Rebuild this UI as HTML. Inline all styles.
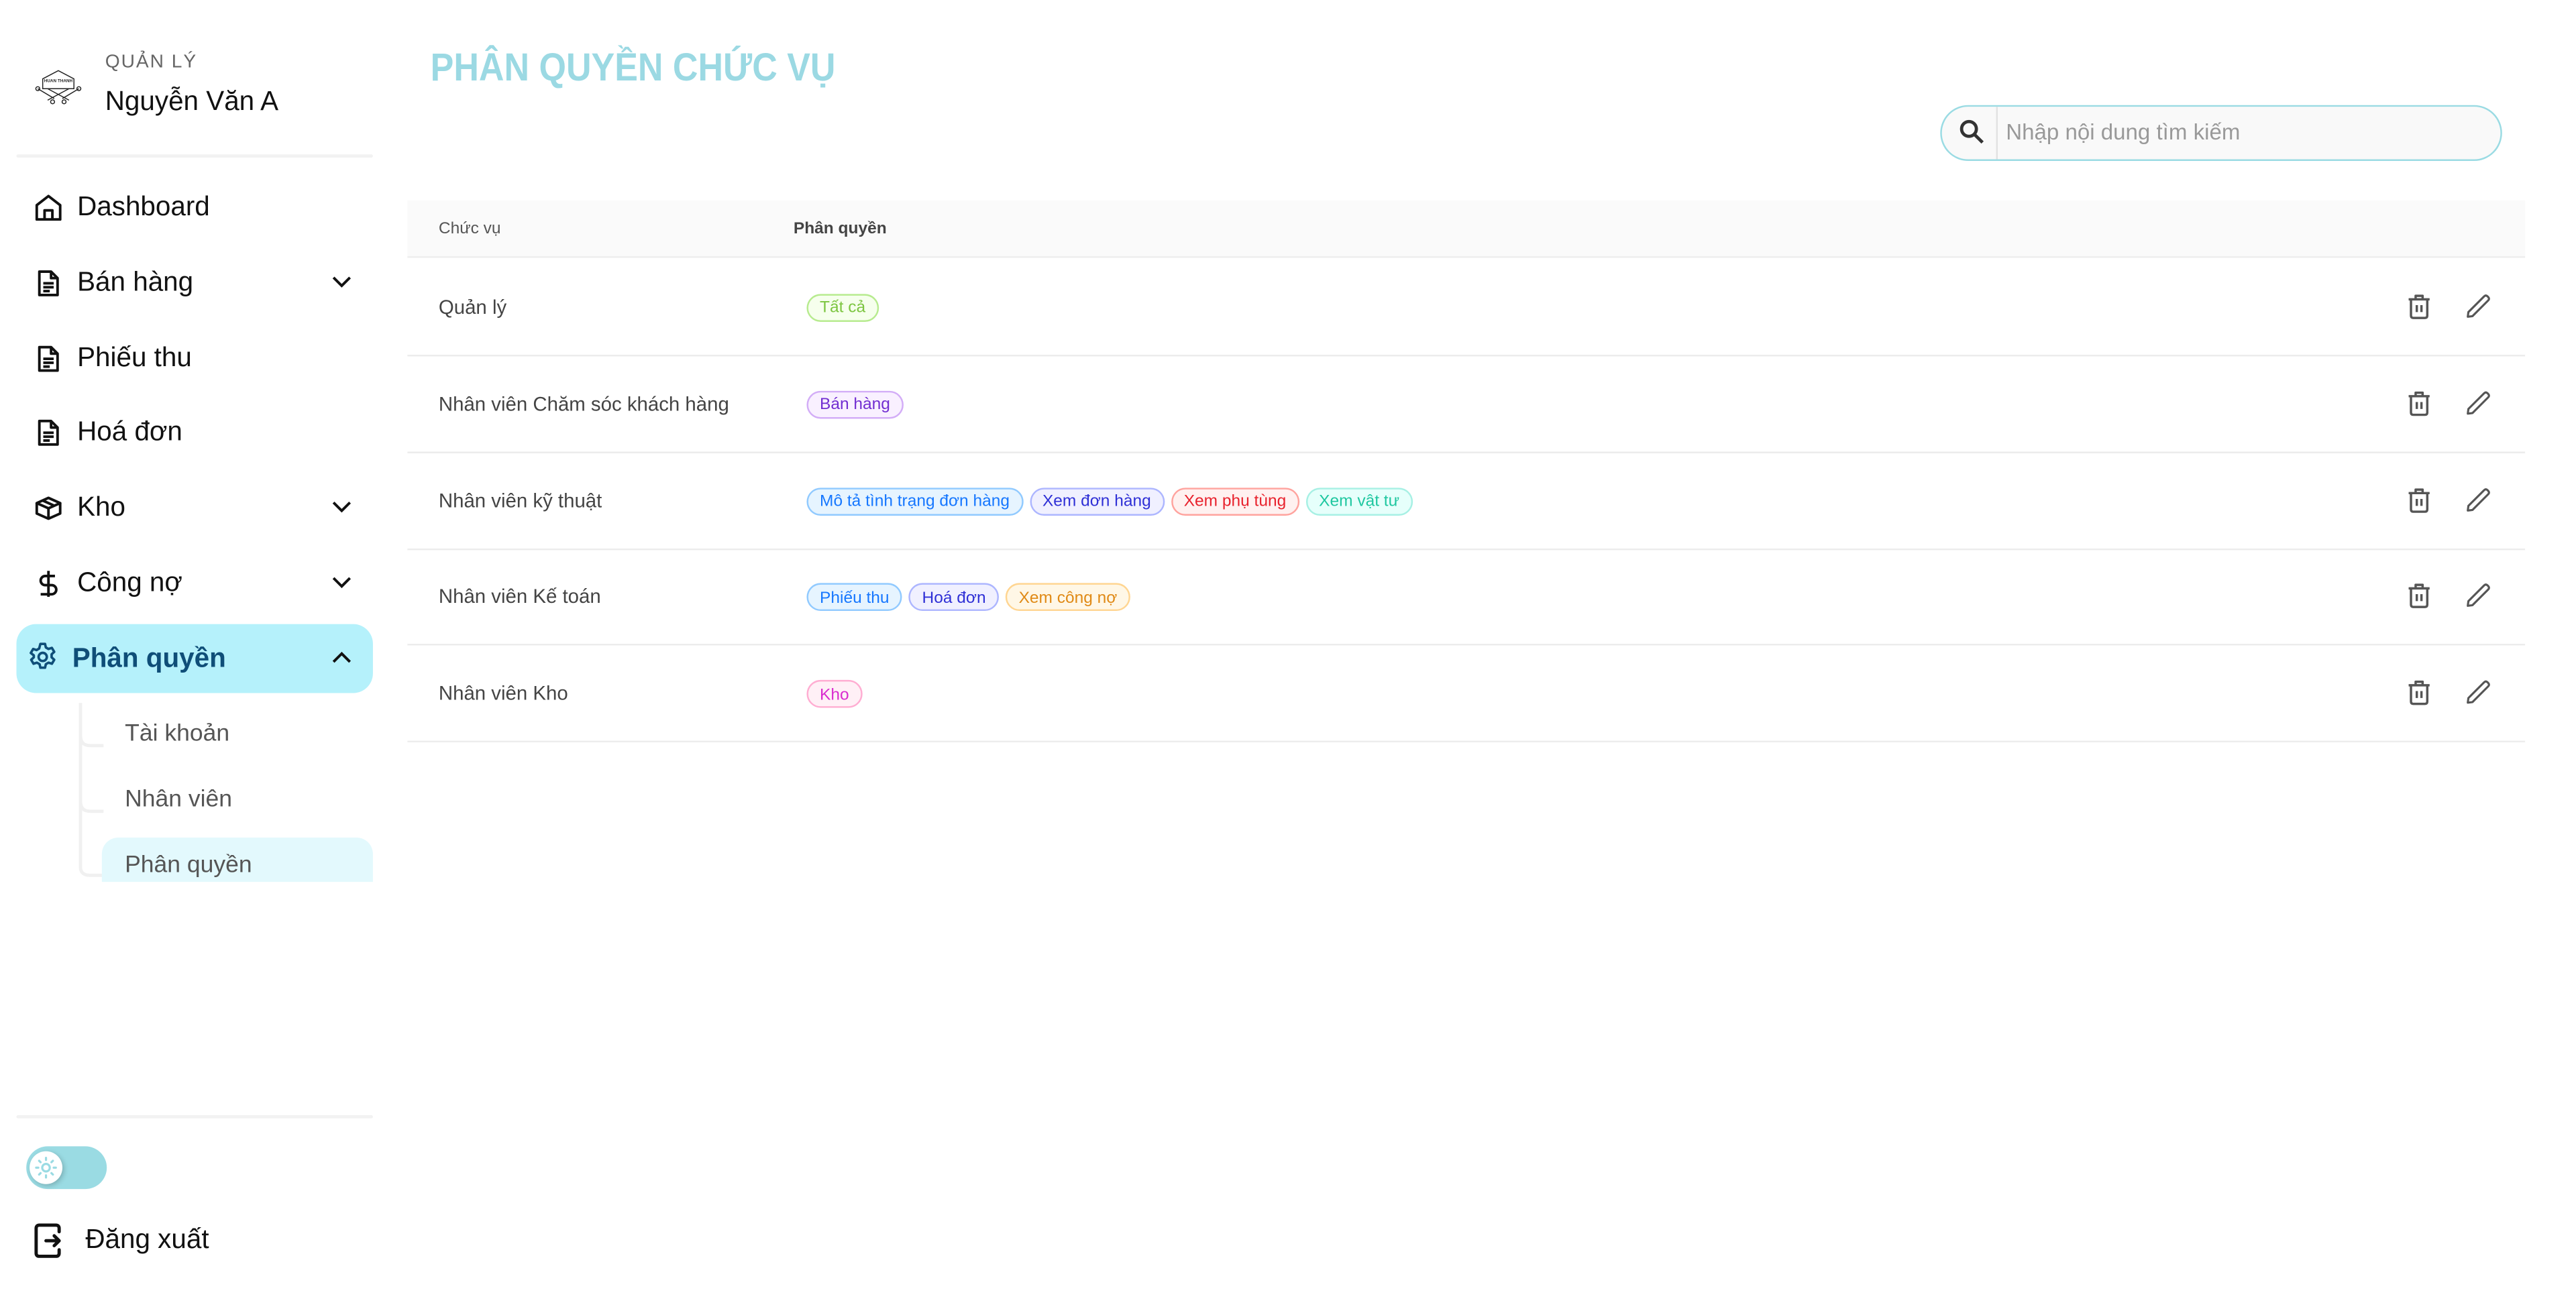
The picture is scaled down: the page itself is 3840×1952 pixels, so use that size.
<!DOCTYPE html>
<html><head><meta charset="utf-8">
<style>
html,body{margin:0;padding:0;background:#fff;width:3840px;height:1950px;overflow:hidden}
#w{position:absolute;left:0;top:0;width:1568px;height:797px;transform:scale(2.449);transform-origin:0 0;font-family:"Liberation Sans","DejaVu Sans",sans-serif}
.a{position:absolute}
.mi{position:absolute;left:20px;height:24px;display:flex;align-items:center;font-size:16.5px;color:#111;margin-top:1px}
.mi svg{width:19px;height:19px;margin-right:8px}
.chev{position:absolute;left:201px;width:14px;height:14px}
.sub{position:absolute;left:76px;font-size:14.5px;color:#555;margin-top:1px}
.row{position:absolute;left:248px;width:1289px;height:58px;border-bottom:1.5px solid #ececec}
.row .t{position:absolute;left:19px;top:22px;font-size:12px;color:#444}
.tags{position:absolute;left:243px;top:21px;display:flex;gap:4px}
.tag{box-sizing:border-box;display:flex;align-items:center;padding:1px 7px 0;border-radius:9px;font-size:10px;border:1px solid;height:17px}
.g{background:#f6ffed;color:#7cc540;border-color:#b7eb8f}
.p{background:#f9f0ff;color:#722ed1;border-color:#d3adf7}
.b{background:#e6f4ff;color:#1677ff;border-color:#91caff}
.gb{background:#f0f0ff;color:#2f30d6;border-color:#adb6ff}
.r{background:#fff1f0;color:#e8222d;border-color:#ffa39e}
.c{background:#e6fffb;color:#1fc7a0;border-color:#a7f0e4}
.o{background:#fff7e6;color:#e08a16;border-color:#ffd591}
.m{background:#fff0f6;color:#d92ccf;border-color:#ffadd2}
.ic{position:absolute;top:20px;width:17px;height:17px}
</style></head><body><div id="w">
<svg class="a" style="left:20px;top:40px" width="31" height="26" viewBox="0 0 31 26" fill="none" stroke="#222" stroke-width="0.6">
<path d="M6 8 L15.5 3 L25 8 L25 14 L6 14 Z"/>
<text x="15.5" y="10" font-size="2.6" text-anchor="middle" fill="#222" stroke="none" font-family="Liberation Sans" font-weight="bold">HUAN THANH</text>
<path d="M3 14 L13 20 M28 14 L18 20 M9 21 L22 14 M22 21 L9 14"/>
<circle cx="3" cy="14" r="1.2"/><circle cx="28" cy="14" r="1.2"/><circle cx="12" cy="22" r="1.2"/><circle cx="19" cy="22" r="1.2"/>
</svg>
<div class="a" style="left:64px;top:32px;font-size:11.5px;color:#666;letter-spacing:0.8px">QUẢN LÝ</div>
<div class="a" style="left:64px;top:53px;font-size:16.5px;color:#111">Nguyễn Văn A</div>
<div class="a" style="left:10px;top:94px;width:217px;height:2px;background:#f2f2f2;border-radius:1px"></div>

<div class="mi" style="top:113px"><svg viewBox="0 0 24 24" fill="none" stroke="#111" stroke-width="2" stroke-linejoin="round"><path d="M3 10 L12 3 L21 10 V21 H3 Z"/><path d="M9 21 V14 H15 V21"/></svg>Dashboard</div>
<div class="mi" style="top:159px"><svg viewBox="0 0 24 24" fill="none" stroke="#111" stroke-width="2" stroke-linejoin="round"><path d="M5 3 H14 L19 8 V21 H5 Z"/><path d="M14 3 V8 H19 M8 12 H16 M8 15 H16 M8 18 H13"/></svg>Bán hàng</div>
<svg class="chev" style="top:164px" viewBox="0 0 14 14" fill="none" stroke="#111" stroke-width="1.6"><path d="M2 5 L7 10 L12 5"/></svg>
<div class="mi" style="top:205px"><svg viewBox="0 0 24 24" fill="none" stroke="#111" stroke-width="2" stroke-linejoin="round"><path d="M5 3 H14 L19 8 V21 H5 Z"/><path d="M14 3 V8 H19 M8 12 H16 M8 15 H16 M8 18 H13"/></svg>Phiếu thu</div>
<div class="mi" style="top:250px"><svg viewBox="0 0 24 24" fill="none" stroke="#111" stroke-width="2" stroke-linejoin="round"><path d="M5 3 H14 L19 8 V21 H5 Z"/><path d="M14 3 V8 H19 M8 12 H16 M8 15 H16 M8 18 H13"/></svg>Hoá đơn</div>
<div class="mi" style="top:296px"><svg viewBox="0 0 24 24" fill="none" stroke="#111" stroke-width="2" stroke-linejoin="round"><path d="M3 8 L12 4 L21 8 L12 12 Z"/><path d="M3 8 V16 L12 20 L21 16 V8 M12 12 V20 M7.5 6 L16.5 10"/></svg>Kho</div>
<svg class="chev" style="top:301px" viewBox="0 0 14 14" fill="none" stroke="#111" stroke-width="1.6"><path d="M2 5 L7 10 L12 5"/></svg>
<div class="mi" style="top:342px"><svg viewBox="0 0 24 24" fill="none" stroke="#111" stroke-width="2"><path d="M12 2 V22 M17 6 H9.5 A3.5 3.5 0 0 0 9.5 13 H14.5 A3.5 3.5 0 0 1 14.5 20 H6"/></svg>Công nợ</div>
<svg class="chev" style="top:347px" viewBox="0 0 14 14" fill="none" stroke="#111" stroke-width="1.6"><path d="M2 5 L7 10 L12 5"/></svg>

<div class="a" style="left:10px;top:380px;width:217px;height:42px;background:#b5f1fb;border-radius:12px"></div>
<svg class="a" style="left:16px;top:390px" width="20" height="20" viewBox="0 0 24 24" fill="none" stroke="#0f4e78" stroke-width="1.8" stroke-linejoin="round"><circle cx="12" cy="12" r="3"/><path d="M10.3 2.5h3.4l.6 2.6 1.9 1.1 2.5-.8 1.7 2.9-1.9 1.8v2.2l1.9 1.8-1.7 2.9-2.5-.8-1.9 1.1-.6 2.6h-3.4l-.6-2.6-1.9-1.1-2.5.8-1.7-2.9 1.9-1.8V10.9L3.3 9.1 5 6.2l2.5.8 1.9-1.1z"/></svg>
<div class="a" style="left:44px;top:392px;font-size:16.5px;font-weight:bold;color:#0f4e78">Phân quyền</div>
<svg class="chev" style="top:394px" viewBox="0 0 14 14" fill="none" stroke="#111" stroke-width="1.6"><path d="M2 9 L7 4 L12 9"/></svg>

<svg class="a" style="left:45px;top:428px" width="20" height="110" fill="none" stroke="#f0f0f0" stroke-width="2"><path d="M4 0 V100 Q4 105 10 105 H18 M4 20 Q4 26 10 26 H18 M4 60 Q4 66 10 66 H18"/></svg>
<div class="a" style="left:62px;top:510px;width:165px;height:27px;background:#e3f9fd;border-radius:10px 10px 0 0"></div>
<div class="sub" style="top:438px">Tài khoản</div>
<div class="sub" style="top:478px">Nhân viên</div>
<div class="sub" style="top:518px;height:18px;overflow:hidden">Phân quyền</div>

<div class="a" style="left:10px;top:679px;width:217px;height:2px;background:#f2f2f2;border-radius:1px"></div>
<div class="a" style="left:16px;top:698px;width:49px;height:26px;border-radius:13px;background:#9adbe3"></div>
<div class="a" style="left:18px;top:701px;width:20px;height:20px;border-radius:50%;background:#fff;box-shadow:1px 1px 3px rgba(0,0,0,.2)"></div>
<svg class="a" style="left:21px;top:704px" width="14" height="14" viewBox="0 0 14 14" fill="none" stroke="#9adbe3" stroke-width="1.3" stroke-linecap="round"><circle cx="7" cy="7" r="2.3"/><path d="M7 1v1.3M7 11.7V13M1 7h1.3M11.7 7H13M2.8 2.8l.9.9M10.3 10.3l.9.9M2.8 11.2l.9-.9M10.3 3.7l.9-.9"/></svg>
<svg class="a" style="left:20px;top:745px" width="19" height="21" viewBox="0 0 19 21" fill="none" stroke="#111" stroke-width="2" stroke-linecap="round" stroke-linejoin="round"><path d="M16 5 V3 Q16 1 14 1 H4 Q2 1 2 3 V18 Q2 20 4 20 H14 Q16 20 16 18 V16"/><path d="M8 10.5 H16 M13 7.5 L16 10.5 L13 13.5"/></svg>
<div class="a" style="left:52px;top:746px;font-size:16.5px;color:#111">Đăng xuất</div>

<div class="a" style="left:262px;top:28px;font-size:24px;font-weight:bold;color:#9bd9e3;transform:scaleX(0.885);transform-origin:0 0;white-space:nowrap">PHÂN QUYỀN CHỨC VỤ</div>
<div class="a" style="left:1181px;top:64px;width:340px;height:32px;border:1px solid #9adbe3;border-radius:17px;background:#f9f9f9"></div>
<div class="a" style="left:1215px;top:65px;width:1px;height:32px;background:#e2e2e2"></div>
<svg class="a" style="left:1191px;top:71px" width="18" height="18" viewBox="0 0 24 24" fill="none" stroke="#333" stroke-width="2.6"><circle cx="10" cy="10" r="6"/><path d="M14.5 14.5 L21 21"/></svg>
<div class="a" style="left:1221px;top:73px;font-size:13.5px;color:#999">Nhập nội dung tìm kiếm</div>

<div class="a" style="left:248px;top:122px;width:1289px;height:34px;background:#fafafa;border-bottom:1.5px solid #eee"></div>
<div class="a" style="left:267px;top:134px;font-size:10px;color:#555">Chức vụ</div>
<div class="a" style="left:483px;top:134px;font-size:10px;color:#444;font-weight:bold">Phân quyền</div>

<div class="row" style="top:157.5px"><div class="t">Quản lý</div><div class="tags"><span class="tag g">Tất cả</span></div></div>
<div class="row" style="top:216.5px"><div class="t">Nhân viên Chăm sóc khách hàng</div><div class="tags"><span class="tag p">Bán hàng</span></div></div>
<div class="row" style="top:275.5px"><div class="t">Nhân viên kỹ thuật</div><div class="tags"><span class="tag b">Mô tả tình trạng đơn hàng</span><span class="tag gb">Xem đơn hàng</span><span class="tag r">Xem phụ tùng</span><span class="tag c">Xem vật tư</span></div></div>
<div class="row" style="top:334px"><div class="t">Nhân viên Kế toán</div><div class="tags"><span class="tag b">Phiếu thu</span><span class="tag gb">Hoá đơn</span><span class="tag o">Xem công nợ</span></div></div>
<div class="row" style="top:393px"><div class="t">Nhân viên Kho</div><div class="tags"><span class="tag m">Kho</span></div></div>

<div id="icons"></div>
<script>
var h='';[157.5,216.5,275.5,334,393].forEach(function(t){
h+='<svg class="ic" style="left:1464px;top:'+(t+20)+'px" viewBox="0 0 24 24" fill="none" stroke="#555" stroke-width="2" stroke-linejoin="round"><path d="M3 6 H21 M9 6 V3 H15 V6 M5 6 V20 Q5 22 7 22 H17 Q19 22 19 20 V6 M10 11 V17 M14 11 V17"/></svg>';
h+='<svg class="ic" style="left:1500px;top:'+(t+20)+'px" viewBox="0 0 24 24" fill="none" stroke="#555" stroke-width="1.8" stroke-linejoin="round"><path d="M3 21 L3.5 17 L17 3.5 Q18.5 2 20 3.5 L20.5 4 Q22 5.5 20.5 7 L7 20.5 Z"/></svg>';});
document.getElementById('icons').innerHTML=h;
</script>
</div></body></html>
